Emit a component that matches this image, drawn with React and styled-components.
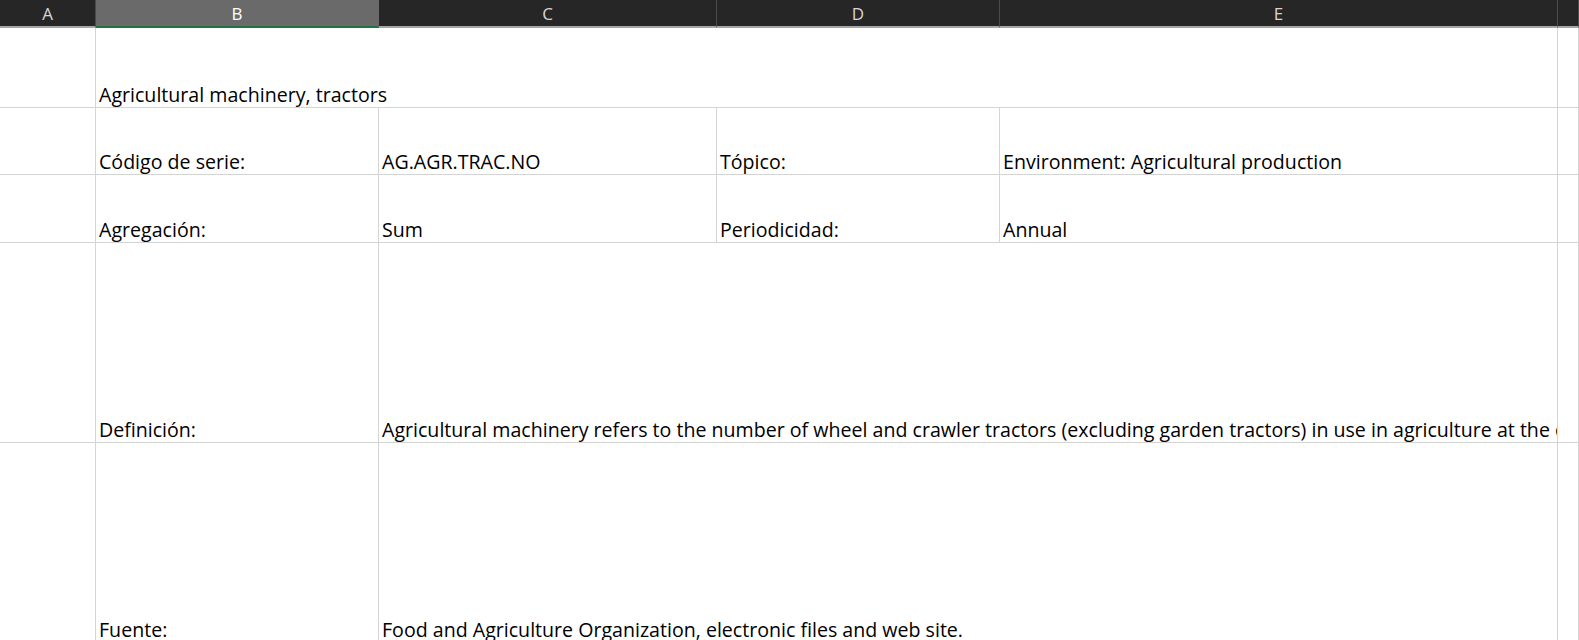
import React from "react";
import styled, { createGlobalStyle } from "styled-components";

const GlobalStyle = createGlobalStyle`
  html, body {
    margin: 0;
    padding: 0;
    background: #ffffff;
    overflow: hidden;
  }
`;

const GRID = "#d4d4d4";

const Sheet = styled.div`
  display: grid;
  grid-template-columns: 96px 283px 338px 283px 558px 1fr;
  grid-template-rows: 28px 80px 67px 68px 200px 200px;
  width: 100%;
  font-family: "Open Sans", "Noto Sans", sans-serif;
`;

const HeaderCell = styled.div`
  box-sizing: border-box;
  display: flex;
  align-items: center;
  justify-content: center;
  background: ${p => (p.$selected ? "#6a6a6a" : "#262626")};
  color: ${p => (p.$selected ? "#ffffff" : "#d6d6d6")};
  font-size: 17px;
  padding-top: 1px;
  border-right: 1px solid ${p => (p.$selected ? "#6a6a6a" : "#4c4c4c")};
  border-bottom: 2px solid ${p => (p.$selected ? "#217346" : "#a6a6a6")};
`;

const Cell = styled.div`
  box-sizing: border-box;
  grid-column: span ${p => p.$span || 1};
  display: flex;
  align-items: flex-end;
  padding: 0 0 1px 3px;
  border-right: 1px solid ${GRID};
  border-bottom: 1px solid ${GRID};
  font-size: 19.6px;
  line-height: 22px;
  color: #000000;
  white-space: nowrap;
  overflow: hidden;
`;

const cols = ["A", "B", "C", "D", "E", ""];

const rows = [
  [{ text: "" }, { text: "Agricultural machinery, tractors", span: 4 }, { text: "" }],
  [
    { text: "" },
    { text: "Código de serie:" },
    { text: "AG.AGR.TRAC.NO" },
    { text: "Tópico:" },
    { text: "Environment: Agricultural production" },
    { text: "" },
  ],
  [
    { text: "" },
    { text: "Agregación:" },
    { text: "Sum" },
    { text: "Periodicidad:" },
    { text: "Annual" },
    { text: "" },
  ],
  [
    { text: "" },
    { text: "Definición:" },
    {
      text:
        "Agricultural machinery refers to the number of wheel and crawler tractors (excluding garden tractors) in use in agriculture at the end of the calendar year specified or during the first quarter of the following year.",
      span: 3,
    },
    { text: "" },
  ],
  [
    { text: "" },
    { text: "Fuente:" },
    { text: "Food and Agriculture Organization, electronic files and web site.", span: 3 },
    { text: "" },
  ],
];

export default function App() {
  return (
    <>
      <GlobalStyle />
      <Sheet>
        {cols.map((c, i) => (
          <HeaderCell key={"h" + i} $selected={c === "B"}>
            {c}
          </HeaderCell>
        ))}
        {rows.map((row, r) =>
          row.map((cell, i) => (
            <Cell key={r + "-" + i} $span={cell.span}>
              {cell.text}
            </Cell>
          ))
        )}
      </Sheet>
    </>
  );
}
